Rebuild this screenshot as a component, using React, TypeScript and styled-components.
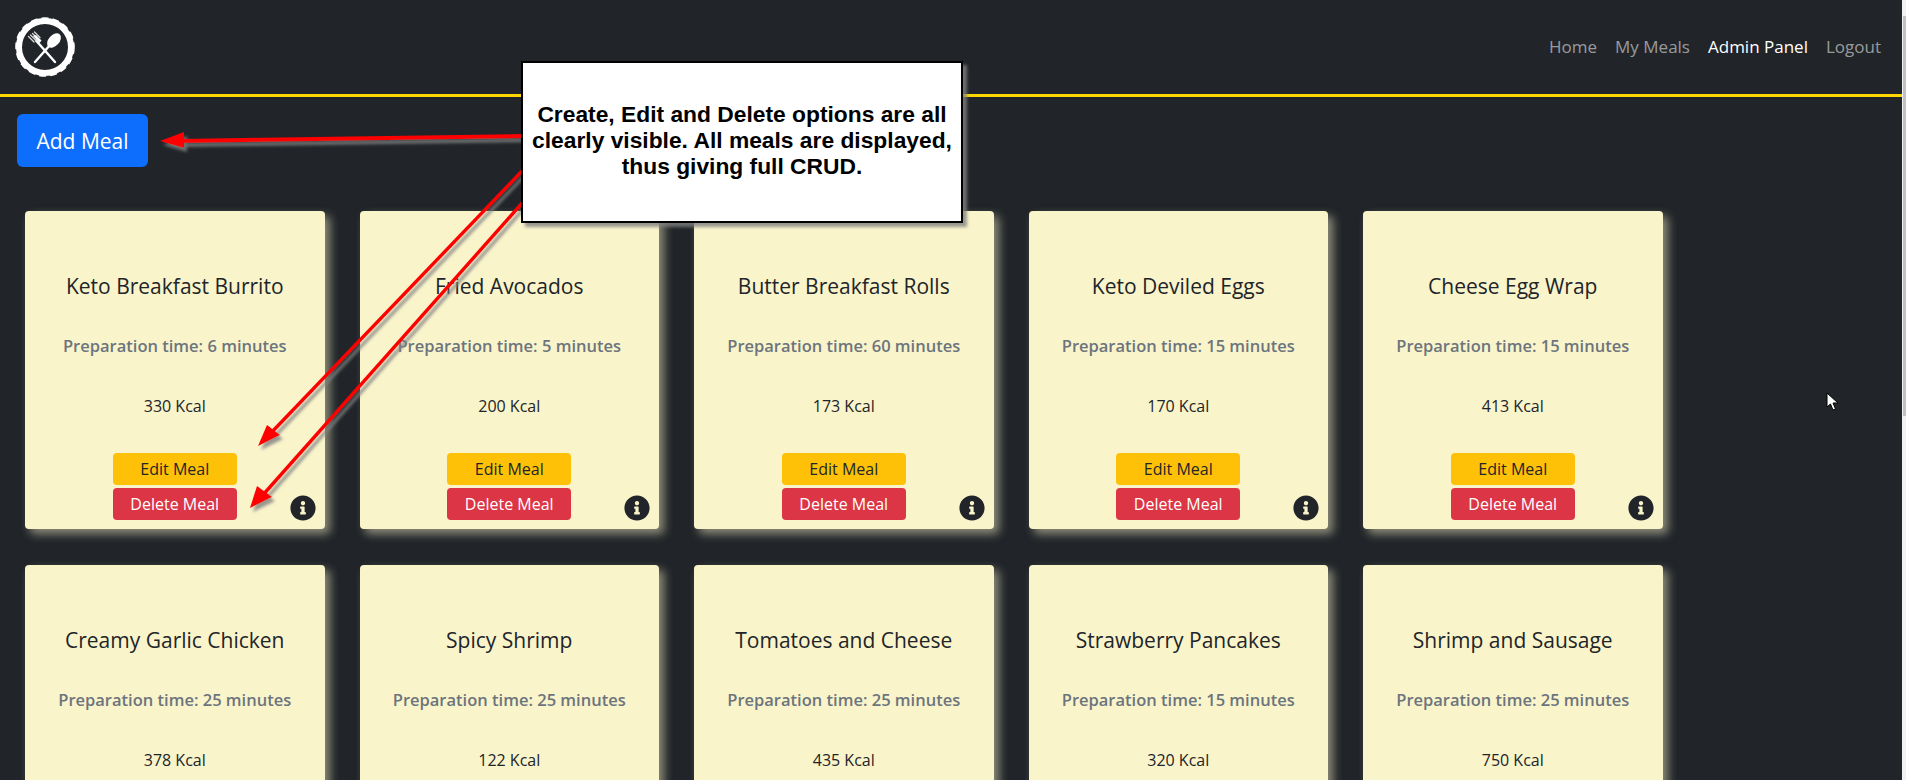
import React from 'react';
import styled, { createGlobalStyle } from 'styled-components';
import { FaInfoCircle } from 'react-icons/fa';

const meals = [
    { name: 'Keto Breakfast Burrito', time: 6, kcal: 330 },
    { name: 'Fried Avocados', time: 5, kcal: 200 },
    { name: 'Butter Breakfast Rolls', time: 60, kcal: 173 },
    { name: 'Keto Deviled Eggs', time: 15, kcal: 170 },
    { name: 'Cheese Egg Wrap', time: 15, kcal: 413 },
    { name: 'Creamy Garlic Chicken', time: 25, kcal: 378 },
    { name: 'Spicy Shrimp', time: 25, kcal: 122 },
    { name: 'Tomatoes and Cheese', time: 25, kcal: 435 },
    { name: 'Strawberry Pancakes', time: 15, kcal: 320 },
    { name: 'Shrimp and Sausage', time: 25, kcal: 750 },
];

const links = ['Home', 'My Meals', 'Admin Panel', 'Logout'];

const Logo = () => (
    <svg width="60" height="60" viewBox="0 0 60 60" fill="none">
        <circle cx="30" cy="30" r="26" stroke="#fff" strokeWidth="6" />
        <circle cx="30" cy="30" r="28.8" stroke="#fff" strokeWidth="2" strokeDasharray="7 4" />
        <path d="M40 45 L21 23.5" stroke="#fff" strokeWidth="2.4" strokeLinecap="round" />
        <path d="M21 23.5 L15.5 18 M23 22 L17.5 16.5 M19 25 L13.5 19.5 M25 20.5 L19.5 15" stroke="#d8d8d8" strokeWidth="1.3" strokeLinecap="round" />
        <path d="M18 19 L24.5 26 L26.5 23.5 L21 18 Z" fill="#fff" />
        <path d="M20 45 L35 28" stroke="#fff" strokeWidth="2.4" strokeLinecap="round" />
        <ellipse cx="39" cy="23.5" rx="5.4" ry="8.4" transform="rotate(42 39 23.5)" fill="#fff" />
    </svg>
);

const Arrows = () => (
    <ArrowLayer viewBox="0 0 1906 780">
        <defs>
            <filter id="arrowShadow" x="-20%" y="-20%" width="140%" height="140%">
                <feDropShadow dx="3" dy="4" stdDeviation="1.5" floodColor="#808080" floodOpacity="0.8" />
            </filter>
        </defs>
        <g filter="url(#arrowShadow)" fill="#f00" stroke="#f00">
            <path d="M525 136 L180 141" strokeWidth="4" />
            <path d="M160 141 L184 132 L184 148 Z" strokeWidth="0" />
            <path d="M524 169 L270 434" strokeWidth="3.4" />
            <path d="M258 446 L267 425 L280 435 Z" strokeWidth="0" />
            <path d="M524 201 L262 496" strokeWidth="3.4" />
            <path d="M250 508 L257 486 L272 497 Z" strokeWidth="0" />
        </g>
    </ArrowLayer>
);

const App = () => {
    return (
        <Page>
            <GlobalStyle />
            <Main>
                <Navbar>
                    <Logo />
                    <NavLinks>
                        {links.map((link) => (
                            <NavLink key={link} $active={link === 'Admin Panel'}>{link}</NavLink>
                        ))}
                    </NavLinks>
                </Navbar>
                <AddButton>Add Meal</AddButton>
                <CardGrid>
                    {meals.map((meal) => (
                        <Card key={meal.name}>
                            <Title>{meal.name}</Title>
                            <Subtitle>Preparation time: {meal.time} minutes</Subtitle>
                            <Kcal>{meal.kcal} Kcal</Kcal>
                            <MealButton $kind="edit">Edit Meal</MealButton>
                            <MealButton $kind="delete">Delete Meal</MealButton>
                            <InfoBadge><FaInfoCircle size={26} /></InfoBadge>
                        </Card>
                    ))}
                </CardGrid>
            </Main>
            <ScrollTrack>
                <ScrollThumb />
            </ScrollTrack>
            <Arrows />
            <Callout>
                Create, Edit and Delete options are all clearly visible. All meals are displayed, thus giving full CRUD.
            </Callout>
            <Pointer width="14" height="20" viewBox="0 0 14 20">
                <path d="M1 1 L1 15 L4.5 12 L7 18 L9.5 17 L7 11 L12 11 Z" fill="#fff" stroke="#000" strokeWidth="1" />
            </Pointer>
        </Page>
    );
};

const GlobalStyle = createGlobalStyle`
    html, body {
        margin: 0;
        height: 780px;
        overflow: hidden;
        background: #212529;
    }
    * {
        box-sizing: border-box;
    }
`

const Page = styled.div`
    position: relative;
    display: flex;
    width: 1906px;
    height: 780px;
    overflow: hidden;
    font-family: "Open Sans", sans-serif;
    color: #212529;
`

const Main = styled.div`
    flex: 1;
    min-width: 0;
    background: #212529;
`

const Navbar = styled.nav`
    display: flex;
    align-items: center;
    justify-content: space-between;
    height: 97px;
    padding: 0 21px 0 15px;
    border-bottom: 3px solid #ffd700;
`

const NavLinks = styled.div`
    display: flex;
    gap: 18px;
`

const NavLink = styled.a<{$active: boolean}>`
    font-size: 17px;
    line-height: 24px;
    color: ${({$active}) => $active ? '#fff' : 'rgba(255, 255, 255, 0.55)'};
`

const AddButton = styled.button`
    display: block;
    width: 131px;
    height: 53px;
    margin: 17px 0 44px 17px;
    border: none;
    border-radius: 6px;
    background: #0d6efd;
    color: #fff;
    font-family: inherit;
    font-size: 21px;
`

const CardGrid = styled.div`
    display: grid;
    grid-template-columns: repeat(5, 299.5px);
    gap: 36px 35px;
    padding-left: 25px;
`

const Card = styled.div`
    position: relative;
    display: flex;
    flex-direction: column;
    align-items: center;
    height: 318px;
    padding-top: 63px;
    border-radius: 4px;
    background: #faf4cb;
    box-shadow: 5px 5px 10px rgba(250, 243, 204, 0.5);
`

const Title = styled.h5`
    margin: 0 0 36px;
    font-size: 21px;
    font-weight: 500;
    line-height: 24px;
`

const Subtitle = styled.h6`
    margin: 0 0 36px;
    font-size: 16.5px;
    font-weight: 600;
    line-height: 24px;
    color: #6c757d;
`

const Kcal = styled.p`
    margin: 0 0 35px;
    font-size: 16px;
    line-height: 24px;
`

const MealButton = styled.button<{$kind: 'edit' | 'delete'}>`
    flex: none;
    width: 124px;
    height: 32px;
    margin-bottom: 3px;
    border: none;
    border-radius: 4px;
    background: ${({$kind}) => $kind === 'edit' ? '#ffc107' : '#dc3545'};
    color: ${({$kind}) => $kind === 'edit' ? '#212529' : '#fff'};
    font-family: inherit;
    font-size: 16px;
`

const InfoBadge = styled.span`
    position: absolute;
    right: 9px;
    bottom: 8px;
    display: flex;
    color: #212529;
`

const ScrollTrack = styled.div`
    flex: none;
    width: 4px;
    padding-left: 1px;
    padding-top: 16px;
    background: #f1f1f1;
`

const ScrollThumb = styled.div`
    height: 400px;
    background: #c1c1c1;
`

const ArrowLayer = styled.svg`
    position: absolute;
    top: 0;
    left: 0;
    width: 1906px;
    height: 780px;
    pointer-events: none;
`

const Callout = styled.div`
    position: absolute;
    top: 61px;
    left: 521px;
    display: flex;
    align-items: center;
    width: 442px;
    height: 162px;
    padding: 0 4px 5px;
    border: 2px solid #000;
    background: #fff;
    box-shadow: 4px 4px 3px rgba(128, 128, 128, 0.8);
    font-family: "Liberation Sans", Arial, sans-serif;
    font-size: 22.8px;
    font-weight: 700;
    line-height: 26px;
    text-align: center;
    color: #000;
`

const Pointer = styled.svg`
    position: absolute;
    top: 392px;
    left: 1826px;
`

export default App;
